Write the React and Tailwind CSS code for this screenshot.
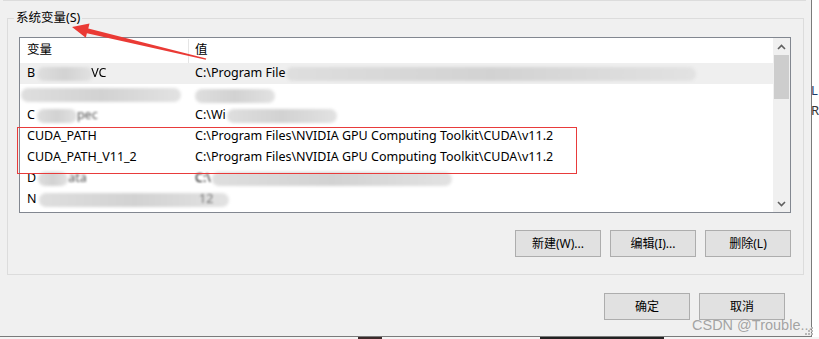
import React from 'react';

const Smear = ({ w, className = '' }) => (
  <span
    className={`inline-block h-[14px] align-middle rounded-full bg-gradient-to-r from-[#dedede] via-[#d2d2d2] to-[#e2e2e2] blur-[1.5px] ${className}`}
    style={{ width: w }}
  />
);

const rows = [
  {
    name: (
      <>
        B<Smear w={56} className="ml-[2px] -mr-[2px]" />
        <span className="blur-[0.6px]">VC</span>
      </>
    ),
    value: (
      <>
        C:\Program File<Smear w={410} className="ml-[1px]" />
      </>
    ),
    bg: 'bg-[#efefef]',
  },
  {
    name: <Smear w={160} className="-ml-[6px]" />,
    value: <Smear w={80} className="mt-[2px]" />,
  },
  {
    name: (
      <>
        C<Smear w={40} className="ml-[2px]" />
        <span className="blur-[0.8px] text-[#555]">pec</span>
      </>
    ),
    value: (
      <>
        C:\Wi<Smear w={110} className="ml-[1px]" />
      </>
    ),
  },
  {
    name: 'CUDA_PATH',
    value: 'C:\\Program Files\\NVIDIA GPU Computing Toolkit\\CUDA\\v11.2',
  },
  {
    name: 'CUDA_PATH_V11_2',
    value: 'C:\\Program Files\\NVIDIA GPU Computing Toolkit\\CUDA\\v11.2',
  },
  {
    name: (
      <>
        D<Smear w={30} className="ml-[2px]" />
        <span className="blur-[0.8px] text-[#555]">ata</span>
      </>
    ),
    value: (
      <>
        <span className="blur-[0.8px]">C:\</span>
        <Smear w={240} className="ml-[1px]" />
      </>
    ),
  },
  {
    name: (
      <>
        N<Smear w={190} className="ml-[2px] -mr-[40px]" />
      </>
    ),
    value: <span className="blur-[1px] text-[#777] ml-[4px]">12</span>,
  },
];

const Button = ({ children }) => (
  <button className="w-[86px] h-[27px] bg-[#e1e1e1] border border-[#adadad] text-[12px] text-black flex items-center justify-center">
    {children}
  </button>
);

export default function App() {
  return (
    <div className="relative w-[819px] h-[339px] overflow-hidden bg-white font-['Noto_Sans','Noto_Sans_CJK_SC',sans-serif] text-[12px] text-black">
      <div className="flex h-[337px]">
        {/* dialog window */}
        <div className="w-[815px] h-[337px] bg-[#f0f0f0] border-r border-b border-[#7a7a7a] flex flex-col">
          <div className="h-px w-[803px] ml-[3px] bg-[#dcdcdc]" />

          {/* group box */}
          <div className="relative ml-[7px] mt-[17px] w-[797px] h-[257px] border border-[#dcdcdc] flex flex-col">
            <div className="absolute -top-[10px] left-[6px] px-[2px] bg-[#f0f0f0] leading-[18px] text-[12.5px]">
              系统变量(S)
            </div>

            {/* list view */}
            <div className="ml-[11px] mt-[18px] w-[772px] h-[176px] border border-[#828790] bg-white flex">
              <div className="flex-1 flex flex-col overflow-hidden text-[12.5px]">
                <div className="h-[25px] flex items-center shrink-0">
                  <div className="w-[168px] pl-[7px]">变量</div>
                  <div className="w-px h-[24px] bg-[#e5e5e5]" />
                  <div className="pl-[6px]">值</div>
                </div>
                {rows.map((r, i) => (
                  <div key={i} className={`h-[21px] flex items-center shrink-0 whitespace-nowrap ${r.bg || ''}`}>
                    <div className="w-[169px] pl-[7px] flex items-center">{r.name}</div>
                    <div className="pl-[6px] flex items-center">{r.value}</div>
                  </div>
                ))}
              </div>

              {/* scrollbar */}
              <div className="w-[17px] bg-[#f0f0f0] flex flex-col">
                <div className="h-[17px] flex items-center justify-center">
                  <svg width="9" height="6" viewBox="0 0 9 6">
                    <path d="M1 5 L4.5 1.5 L8 5" fill="none" stroke="#606060" strokeWidth="1.6" />
                  </svg>
                </div>
                <div className="h-[44px] mx-[1px] bg-[#cdcdcd]" />
                <div className="flex-1" />
                <div className="h-[17px] flex items-center justify-center">
                  <svg width="9" height="6" viewBox="0 0 9 6">
                    <path d="M1 1 L4.5 4.5 L8 1" fill="none" stroke="#606060" strokeWidth="1.6" />
                  </svg>
                </div>
              </div>
            </div>

            <div className="mt-[17px] mr-[12px] flex justify-end gap-[9px]">
              <Button>新建(W)...</Button>
              <Button>编辑(I)...</Button>
              <Button>删除(L)</Button>
            </div>
          </div>

          <div className="mt-[18px] ml-[604px] flex gap-[9px]">
            <Button>确定</Button>
            <Button>取消</Button>
          </div>
        </div>

        {/* window behind, right edge */}
        <div className="flex-1 flex flex-col pt-[82px] text-[13px] leading-[16px] text-[#1a3a6a]">
          <span className="-ml-[1px]">L</span>
          <span className="-ml-[1px] mt-[4px] text-[#333]">R</span>
        </div>
      </div>

      {/* window behind, bottom edge */}
      <div className="flex h-[2px]">
        <div className="w-[358px] bg-[#f4f4f4]" />
        <div className="w-[24px] bg-[#3a2a2a]" />
        <div className="w-[158px] bg-[#f4f4f4]" />
        <div className="w-[124px] bg-[#222]" />
        <div className="flex-1 bg-[#f4f4f4]" />
      </div>

      {/* red highlight box */}
      <div className="absolute left-[17px] top-[127px] w-[560px] h-[47px] border border-[#e83b3b] pointer-events-none" />

      {/* red arrow */}
      <svg className="absolute left-0 top-0 pointer-events-none" width="819" height="339">
        <polygon
          points="72,27 89.5,23.5 88.3,28.4 206.2,58.4 205.8,59.8 86.9,33.2 85.8,37.8"
          fill="#ea3a35"
        />
      </svg>

      {/* watermark */}
      <div className="absolute left-[692px] top-[316px] text-[14.5px] leading-[18px] text-[#9a9a9a]/90 font-['Liberation_Sans',sans-serif] whitespace-nowrap">
        CSDN @Trouble...
      </div>
      <svg className="absolute left-[805px] top-[327px]" width="9" height="9">
        <rect x="6" y="0" width="2" height="2" fill="#b8b8b8" />
        <rect x="3" y="3" width="2" height="2" fill="#b8b8b8" />
        <rect x="6" y="3" width="2" height="2" fill="#b8b8b8" />
        <rect x="0" y="6" width="2" height="2" fill="#b8b8b8" />
        <rect x="3" y="6" width="2" height="2" fill="#b8b8b8" />
        <rect x="6" y="6" width="2" height="2" fill="#b8b8b8" />
      </svg>
    </div>
  );
}
